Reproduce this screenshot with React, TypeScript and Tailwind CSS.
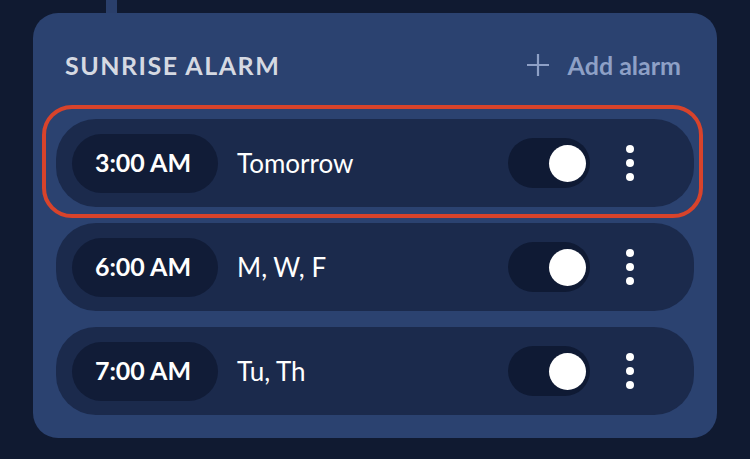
import React from "react";

const alarms = [
  { time: "3:00 AM", days: "Tomorrow", selected: true },
  { time: "6:00 AM", days: "M, W, F", selected: false },
  { time: "7:00 AM", days: "Tu, Th", selected: false },
];

function Row({ time, days, selected }: { time: string; days: string; selected: boolean }) {
  return (
    <div className="relative">
      {selected && (
        <div className="pointer-events-none absolute -left-[14px] -right-[9px] -top-[14px] -bottom-[11px] rounded-[30px] border-[4px] border-[#d8432b]" />
      )}
      <div className="flex h-[88px] items-center rounded-[40px] bg-[#1b2a4c] pl-4 pr-[60px]">
        <div className="flex h-[59px] w-[146px] items-center justify-center rounded-full bg-[#111c37] pr-1 text-[25px] font-bold text-white">
          {time}
        </div>
        <div className="ml-[19px] text-[26px] text-white">{days}</div>
        <div className="ml-auto flex h-[50px] w-[82px] items-center justify-end rounded-full bg-[#0f1a34] pr-1">
          <div className="h-[37px] w-[37px] rounded-full bg-white" />
        </div>
        <div className="ml-[36px] flex flex-col gap-[6px]">
          <div className="h-[8px] w-[8px] rounded-full bg-white" />
          <div className="h-[8px] w-[8px] rounded-full bg-white" />
          <div className="h-[8px] w-[8px] rounded-full bg-white" />
        </div>
      </div>
    </div>
  );
}

export default function App() {
  return (
    <div
      className="h-[459px] w-[750px] overflow-hidden bg-[#101a31] pl-[33px] pt-[13px]"
      style={{ fontFamily: "Lato, 'Noto Sans', sans-serif" }}
    >
      <div className="relative h-[425px] w-[684px] rounded-[25px] bg-[#2b4270] px-[23px] pt-[36px]">
        <div className="absolute -top-[13px] left-[73px] h-[13px] w-[11px] bg-[#2a3f6b]" />
        <div className="flex h-[32px] items-center justify-between pl-[9px] pr-[13px] leading-[32px]">
          <div className="text-[25px] font-bold tracking-[1.5px] text-[#d5d9e2]">SUNRISE ALARM</div>
          <div className="flex items-center text-[25px] font-bold text-[#8ea0c6]">
            <svg width="24" height="24" viewBox="0 0 24 24" className="mr-[18px]">
              <path d="M12 1v22M1 12h22" stroke="#8ea0c6" strokeWidth="2.2" />
            </svg>
            Add alarm
          </div>
        </div>
        <div className="mt-[38px] flex flex-col gap-[16px]">
          {alarms.map((a) => (
            <Row key={a.time} {...a} />
          ))}
        </div>
      </div>
    </div>
  );
}
